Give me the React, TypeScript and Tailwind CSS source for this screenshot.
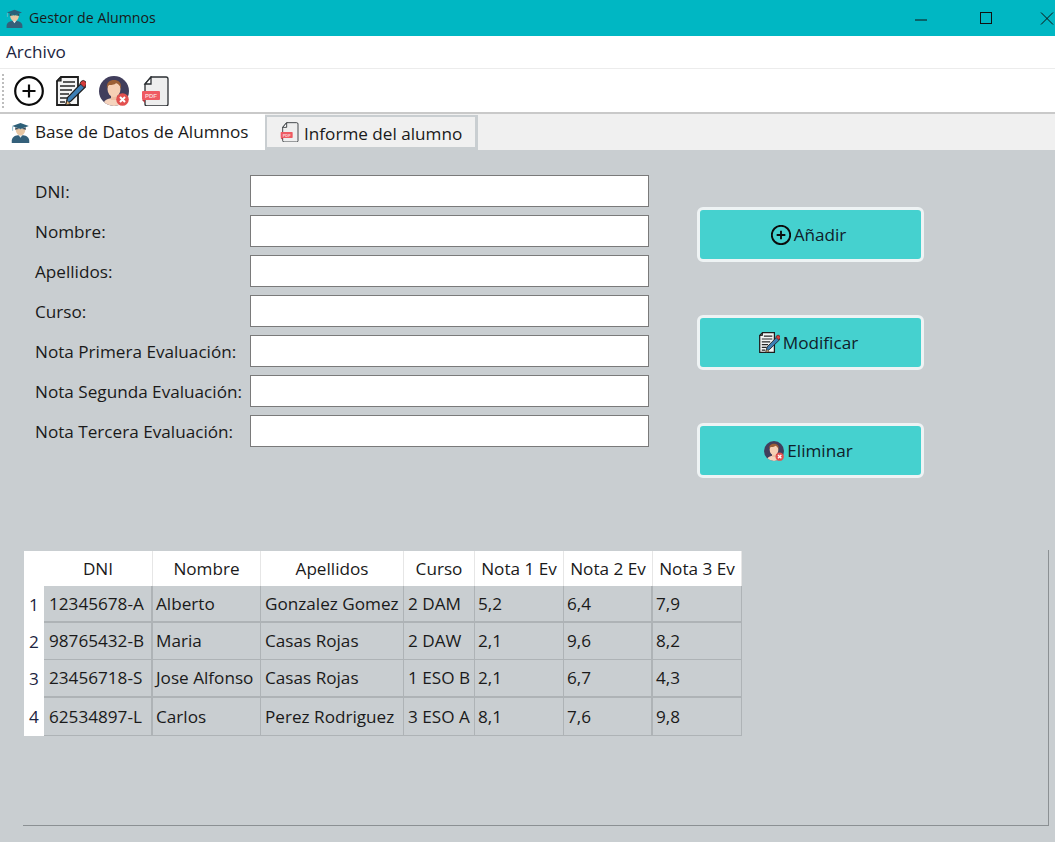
import React from "react";

const Grad = ({ s = 20 }: { s?: number }) => (
  <svg width={s} height={s} viewBox="0 0 24 24">
    <path d="M2 21.500c0-4 3-6 7-6.500h6c4 .5 7 2.500 7 6.500V24H2z" fill="#34607a" />
    <path d="M9.500 14.500 12 18l2.500-3.500z" fill="#e9eef0" />
    <path d="M6.500 8c0 4.500 2.500 7.500 5.500 7.500s5.500-3 5.500-7.500z" fill="#e8c7a4" />
    <path d="M12 1 2.500 4.500 12 8l9.500-3.500z" fill="#2d5f78" />
    <path d="M6 6v3c2-1.500 10-1.500 12 0V6l-6 2.200z" fill="#3b4a55" />
    <path d="M3 5v5" stroke="#7fb5c9" strokeWidth="1" />
  </svg>
);

const Plus = ({ s = 30, w = 2.2 }: { s?: number; w?: number }) => (
  <svg width={s} height={s} viewBox="0 0 30 30" fill="none" stroke="#0b0b0b" strokeWidth={w}>
    <circle cx="15" cy="15" r="13.800" />
    <path d="M15 8.500v13M8.500 15h13" />
  </svg>
);

const Edit = ({ s = 30 }: { s?: number }) => (
  <svg width={s} height={s} viewBox="0 0 30 30">
    <path d="M5 1h17v28H1V5z" fill="#f4f4f4" stroke="#1d1d1d" strokeWidth="1.800" />
    <path d="M5 1v4H1z" fill="#555" stroke="#1d1d1d" strokeWidth="1.200" />
    <path d="M7 6h12M4 10h15M4 14h12M4 18h9M4 22h7M4 26h5" stroke="#262626" strokeWidth="1.700" />
    <path d="M10 28l1.500-6.500L25.500 7l4 4L15 25z" fill="#3d7fb5" stroke="#1d1d1d" strokeWidth="1.200" />
    <path d="M25 5.500a2.500 2.500 0 0 1 4.500 4.500l-1.500 1.500-4-4z" fill="#d33c3c" stroke="#1d1d1d" strokeWidth=".8" />
    <path d="M10 29l.8-4.500 3.700 3.200z" fill="#e6b980" stroke="#1d1d1d" strokeWidth=".6" />
  </svg>
);

const Person = ({ s = 30 }: { s?: number }) => (
  <svg width={s} height={s} viewBox="0 0 30 30">
    <defs>
      <clipPath id="p-clip">
        <circle cx="15" cy="15" r="15" />
      </clipPath>
    </defs>
    <circle cx="15" cy="15" r="15" fill="#413e5c" />
    <g clipPath="url(#p-clip)">
      <path d="M4 30c0-6 5-8 11-8s11 2 11 8z" fill="#f5d3bd" />
      <path d="M12 18h6v6h-6z" fill="#eebfa3" />
      <ellipse cx="15" cy="13" rx="6.500" ry="8" fill="#f6cfb4" />
      <path d="M8 13C7 6 11 4 15 4s8 2 7 9c-1-4-3-5-5-6-1 2-6 2-7 2-1 1-2 2-2 4z" fill="#9c5f36" />
    </g>
    <circle cx="23.500" cy="23.500" r="6.300" fill="#e2504f" />
    <path d="M21 21l5 5M26 21l-5 5" stroke="#fff" strokeWidth="2" />
  </svg>
);

const Pdf = ({ s = 30 }: { s?: number }) => (
  <svg width={s} height={s} viewBox="0 0 30 30">
    <path d="M10 1h15a2 2 0 0 1 2 2v25a2 2 0 0 1-2 2H6a2 2 0 0 1-2-2V8z" fill="#eeeeee" stroke="#2b2f33" strokeWidth="1.300" />
    <path d="M10 1v7H4z" fill="#fff" stroke="#2b2f33" strokeWidth="1.300" />
    <rect x="1" y="15" width="18" height="9" rx="1" fill="#ef5a62" />
    <path d="M1 24h3v3z" fill="#b33840" />
    <text x="10" y="22" fontSize="6" fontWeight="700" textAnchor="middle" fill="#f9d4d4" fontFamily="Liberation Sans, sans-serif">PDF</text>
  </svg>
);

const Field = ({ label }: { label: string }) => (
  <div className="flex items-center h-[32px]">
    <span className="w-[215px] shrink-0 whitespace-nowrap pt-[1px]">{label}</span>
    <div className="w-[399px] h-[32px] bg-white border border-[#7a7a7a]" />
  </div>
);

const Btn = ({ icon, label }: { icon: React.ReactNode; label: string }) => (
  <button className="w-[227px] h-[55px] flex items-center justify-center gap-[3px] pr-[4px] bg-[#45d1cf] border-[3px] border-[#eef3f4] rounded-[6px] text-[#10202a]">
    {icon}
    <span className="pt-[1px]">{label}</span>
  </button>
);

const widths = ["w-[109px]", "w-[108px]", "w-[143px]", "w-[71px]", "w-[89px]", "w-[89px]", "w-[89px]"];
const pads = ["pl-[5px]", "pl-[3px]", "pl-[4px]", "pl-[4px]", "pl-[3px]", "pl-[3px]", "pl-[3px]"];
const headers = ["DNI", "Nombre", "Apellidos", "Curso", "Nota 1 Ev", "Nota 2 Ev", "Nota 3 Ev"];
const rows = [
  { h: "h-[37px]", b: "border-b-2", c: ["12345678-A", "Alberto", "Gonzalez Gomez", "2 DAM", "5,2", "6,4", "7,9"] },
  { h: "h-[37px]", b: "border-b", c: ["98765432-B", "Maria", "Casas Rojas", "2 DAW", "2,1", "9,6", "8,2"] },
  { h: "h-[38px]", b: "border-b-2", c: ["23456718-S", "Jose Alfonso", "Casas Rojas", "1 ESO B", "2,1", "6,7", "4,3"] },
  { h: "h-[38px]", b: "border-b", c: ["62534897-L", "Carlos", "Perez Rodriguez", "3 ESO A", "8,1", "7,6", "9,8"] },
];
const rightB = ["border-r-2", "border-r", "border-r", "border-r", "border-r", "border-r-2", "border-r"];

export default function App() {
  return (
    <div className="w-[1055px] h-[842px] overflow-hidden flex flex-col bg-[#c9ced1] text-[#1a1a1a] text-[17.150px] font-['Open_Sans','Noto_Sans',sans-serif]">
      <div className="h-[36px] shrink-0 flex items-center bg-[#00b7c3] text-[14.200px]">
        <div className="w-[29px] pl-[5px] flex"><Grad s={19} /></div>
        <span>Gestor de Alumnos</span>
        <div className="ml-auto flex items-center h-full">
          <svg width="14" height="14" viewBox="0 0 14 14" className="mr-[51px]" stroke="#111" strokeWidth="1" fill="none"><path d="M1 9h12" /></svg>
          <svg width="14" height="14" viewBox="0 0 14 14" className="mr-[47px]" stroke="#111" strokeWidth="1" fill="none"><rect x="1.500" y="1.500" width="11" height="11" /></svg>
          <svg width="14" height="14" viewBox="0 0 14 14" className="mr-[1px]" stroke="#111" strokeWidth="1" fill="none"><path d="M1 1.500l12 12M13 1.500l-12 12" /></svg>
        </div>
      </div>
      <div className="h-[33px] shrink-0 bg-white border-b border-[#ececec] flex items-center pl-[6px] text-[#1c2440]">Archivo</div>
      <div className="h-[45px] shrink-0 bg-white border-b-2 border-[#c9c9c9] flex items-center pl-[2px]">
        <div className="w-[2px] h-[34px] border-l-2 border-dotted border-[#bdbdbd] mr-[10px]" />
        <div className="flex items-center gap-[13px]">
          <div className="-mr-[1px]"><Plus /></div>
          <Edit />
          <Person />
          <div className="-ml-[1px]"><Pdf /></div>
        </div>
      </div>
      <div className="h-[36px] shrink-0 flex bg-[#f0f0f0]">
        <div className="w-[265px] bg-white flex items-center pl-[10px] gap-[4px]">
          <Grad s={21} />
          <span className="whitespace-nowrap">Base de Datos de Alumnos</span>
        </div>
        <div className="w-[213px] h-[35px] mt-[1px] bg-[#f0f0f0] border-[3px] border-l-[2px] border-t-[2px] border-[#c9ced1] flex items-center pl-[13px] gap-[4px] whitespace-nowrap">
          <Pdf s={20} />
          <span className="pt-[3px]">Informe del alumno</span>
        </div>
      </div>
      <div className="flex-1 flex flex-col pt-[25px]">
        <div className="flex pl-[35px]">
          <div className="flex flex-col gap-[8px]">
            <Field label="DNI:" />
            <Field label="Nombre:" />
            <Field label="Apellidos:" />
            <Field label="Curso:" />
            <Field label="Nota Primera Evaluación:" />
            <Field label="Nota Segunda Evaluación:" />
            <Field label="Nota Tercera Evaluación:" />
          </div>
          <div className="ml-[48px] pt-[32px] flex flex-col gap-[53px]">
            <Btn icon={<Plus s={20} w={2.800} />} label="Añadir" />
            <Btn icon={<Edit s={21} />} label="Modificar" />
            <Btn icon={<Person s={20} />} label="Eliminar" />
          </div>
        </div>
        <div className="mt-[72px] ml-[23px] w-[1026px] h-[276px] border-r border-b border-[#8b9093] pl-[1px] pt-[1px]">
          <div className="flex">
            <div className="w-[20px] bg-white flex flex-col text-[#1c2440]">
              <div className="h-[35px]" />
              {rows.map((r, i) => (
                <div key={i} className={`${r.h} flex items-center justify-center`}>{i + 1}</div>
              ))}
            </div>
            <div className="flex flex-col">
              <div className="flex h-[35px] bg-white">
                {headers.map((h, i) => (
                  <div key={h} className={`${widths[i]} flex items-center justify-center border-r border-[#e6e6e6] whitespace-nowrap`}>{h}</div>
                ))}
              </div>
              {rows.map((r, i) => (
                <div key={i} className={`flex ${r.h}`}>
                  {r.c.map((c, j) => (
                    <div key={j} className={`${widths[j]} ${pads[j]} ${r.b} ${rightB[j]} border-[#aeb3b6] flex items-center whitespace-nowrap overflow-hidden`}>{c}</div>
                  ))}
                </div>
              ))}
            </div>
          </div>
        </div>
      </div>
    </div>
  );
}
